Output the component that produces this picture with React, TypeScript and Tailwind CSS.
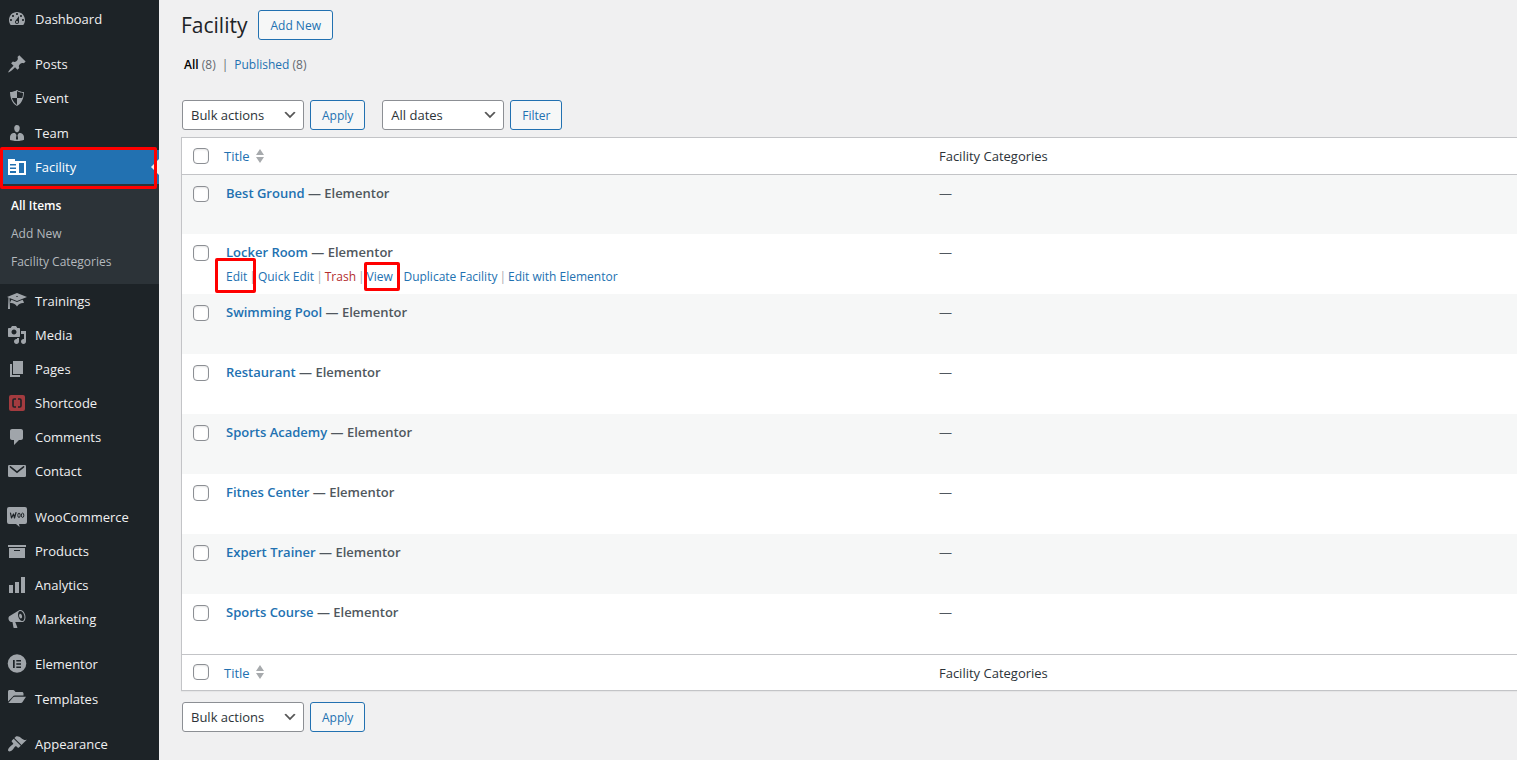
import type { ReactNode } from "react"
import clsx from "clsx"

interface MenuItem {
    title: string
    icon: ReactNode
    gap?: string
}

const Dash = ({ d }: { d: string }) => (
    <svg viewBox="0 0 20 20" className="h-5 w-5" fill="currentColor" fillRule="evenodd" aria-hidden="true">
        <path d={d} />
    </svg>
)

const topItems: MenuItem[] = [
    {
        title: "Dashboard",
        icon: <Dash d="M3.76 16h12.48c1.1-1.37 1.76-3.11 1.76-5 0-4.42-3.58-8-8-8s-8 3.58-8 8c0 1.89.66 3.63 1.76 5zM10 4c.55 0 1 .45 1 1s-.45 1-1 1-1-.45-1-1 .45-1 1-1zM6 6c.55 0 1 .45 1 1s-.45 1-1 1-1-.45-1-1 .45-1 1-1zm8 0c.55 0 1 .45 1 1s-.45 1-1 1-1-.45-1-1 .45-1 1-1zm-5.37 5.55L12 7v6c0 1.1-.9 2-2 2s-2-.9-2-2c0-.57.24-1.08.63-1.45zM4 10c.55 0 1 .45 1 1s-.45 1-1 1-1-.45-1-1 .45-1 1-1zm12 0c.55 0 1 .45 1 1s-.45 1-1 1-1-.45-1-1 .45-1 1-1zm-5 3c0-.55-.45-1-1-1s-1 .45-1 1 .45 1 1 1 1-.45 1-1z" />
    },
    {
        title: "Posts",
        gap: "mt-[11px]",
        icon: <Dash d="M10.44 3.02l1.82-1.82 6.36 6.35-1.83 1.82c-1.05-.68-2.48-.57-3.41.36l-.75.75c-.92.93-1.04 2.35-.35 3.41l-1.83 1.82-2.41-2.41-2.8 2.79c-.42.42-3.38 2.71-3.8 2.29s1.86-3.39 2.28-3.81l2.79-2.79L4.1 9.36l1.83-1.82c1.05.69 2.48.57 3.4-.36l.75-.75c.93-.92 1.05-2.35.36-3.41z" />
    },
    {
        title: "Event",
        icon: <Dash d="M10 2s3 2 7 2c0 11-7 14-7 14S3 15 3 4c4 0 7-2 7-2zm0 8h5s1-1 1-5c0 0-5-1-6-2v7H5c1 4 5 7 5 7v-7z" />
    },
    {
        title: "Team",
        gap: "mt-px",
        icon: <Dash d="M7.3 6l-.03-.19c-.04-.37-.05-.73-.03-1.08.02-.36.1-.71.25-1.04.14-.32.31-.61.52-.86s.49-.46.83-.6c.34-.15.72-.23 1.13-.23.69 0 1.26.2 1.71.59s.76.87.91 1.44.18 1.16.09 1.78l-.03.19c-.01.09-.05.25-.11.48-.05.24-.12.47-.2.69-.08.21-.19.45-.34.72-.14.27-.3.49-.47.69-.18.19-.4.34-.67.48-.27.13-.55.19-.86.19s-.59-.06-.87-.19c-.26-.13-.49-.29-.67-.5-.18-.2-.34-.42-.49-.66-.15-.25-.26-.49-.34-.73-.09-.25-.16-.47-.21-.67-.06-.21-.1-.37-.12-.5zm9.2 6.24c.41.7.5 1.41.5 2.14v2.49c0 .03-.12.08-.29.13-.18.04-.42.13-.97.27-.55.12-1.1.24-1.65.34s-1.19.19-1.95.27c-.75.08-1.46.12-2.13.12-.68 0-1.39-.04-2.14-.12-.75-.07-1.4-.17-1.98-.27-.58-.11-1.08-.23-1.56-.34-.49-.11-.8-.21-1.06-.29L3 16.87v-2.49c0-.75.07-1.46.46-2.15s.81-1.25 1.5-1.68C5.66 10.12 7.19 10 8 10l1.5 2L9 15v1l1.02 1.08L11 16v-1l-.5-3 1.47-2c.77 0 2.2.07 2.9.52.71.45 1.21 1.02 1.63 1.72z" />
    }
]

const bottomItems: MenuItem[] = [
    {
        title: "Trainings",
        icon: <Dash d="M10 10L2.54 7.02 3 18H1l.48-11.41L0 6l10-4 10 4zm0-5c-.55 0-1 .22-1 .5s.45.5 1 .5 1-.22 1-.5-.45-.5-1-.5zm0 6l5.57-2.23c.71.94 1.2 2.07 1.36 3.3-.3-.04-.61-.07-.93-.07-2.55 0-4.78 1.37-6 3.41C8.78 13.37 6.55 12 4 12c-.32 0-.63.03-.93.07.16-1.23.65-2.36 1.36-3.3z" />
    },
    {
        title: "Media",
        icon: <Dash d="M13 11V4c0-.55-.45-1-1-1h-1.67L9 1H5L3.67 3H2c-.55 0-1 .45-1 1v7c0 .55.45 1 1 1h10c.55 0 1-.45 1-1zM7 4.5c1.38 0 2.5 1.12 2.5 2.5S8.38 9.5 7 9.5 4.5 8.38 4.5 7 5.62 4.5 7 4.5zM14 6h5v10.5c0 1.38-1.12 2.5-2.5 2.5S14 17.88 14 16.5s1.12-2.5 2.5-2.5c.17 0 .34.02.5.05V9h-3V6zm-4 8.05V13h2v3.5c0 1.38-1.12 2.5-2.5 2.5S7 17.88 7 16.5 8.12 14 9.5 14c.17 0 .34.02.5.05z" />
    },
    {
        title: "Pages",
        icon: <Dash d="M6 15V2h10v13H6zm-1 1h8v2H3V5h2v11z" />
    },
    {
        title: "Shortcode",
        icon: (
            <svg viewBox="0 0 20 20" className="h-5 w-5" aria-hidden="true">
                <rect x="2" y="2" width="16" height="16" rx="2" fill="#a33b3f" />
                <path d="M9 6H7.200Q6 6 6 7.200v5.600Q6 14 7.200 14H9M11 6h1.800Q14 6 14 7.200v5.600Q14 14 12.800 14H11" fill="none" stroke="#1d2327" strokeWidth="1.6" />
            </svg>
        )
    },
    {
        title: "Comments",
        icon: <Dash d="M5 2h9c1.1 0 2 .9 2 2v7c0 1.1-.9 2-2 2h-2l-5 5v-5H5c-1.1 0-2-.9-2-2V4c0-1.1.9-2 2-2z" />
    },
    {
        title: "Contact",
        icon: (
            <svg viewBox="0 0 20 20" className="h-5 w-5" aria-hidden="true">
                <rect x="1" y="4" width="18" height="12" rx="1.3" fill="currentColor" />
                <path d="M3.4 5.8 10 11.2l6.6-5.4" fill="none" stroke="#1d2327" strokeWidth="1.5" strokeLinecap="round" />
            </svg>
        )
    },
    {
        title: "WooCommerce",
        gap: "mt-3",
        icon: (
            <svg viewBox="0 0 20 20" className="h-5 w-5" aria-hidden="true">
                <path d="M2 0h16a2 2 0 0 1 2 2v13a2 2 0 0 1-2 2h-6l.6 3-3.6-3H2a2 2 0 0 1-2-2V2a2 2 0 0 1 2-2z" fill="currentColor" />
                <path d="M3.5 6l1 5 2-4 1 4L9 5.5" fill="none" stroke="#1d2327" strokeWidth="1.2" strokeLinejoin="round" strokeLinecap="round" />
                <ellipse cx="12" cy="8.3" rx="1.2" ry="2.2" fill="none" stroke="#1d2327" />
                <ellipse cx="15.6" cy="8.3" rx="1.2" ry="2.2" fill="none" stroke="#1d2327" />
            </svg>
        )
    },
    {
        title: "Products",
        icon: <Dash d="M19 4v2H1V4h18zM2 7h16v10H2V7zm11 3V9H7v1h6z" />
    },
    {
        title: "Analytics",
        icon: <Dash d="M18 18V2h-4v16h4zm-6 0V7H8v11h4zm-6 0v-8H2v8h4z" />
    },
    {
        title: "Marketing",
        icon: <Dash d="M18.15 5.94c.46 1.62.38 3.22-.02 4.48-.42 1.28-1.26 2.18-2.3 2.48-.16.06-.26.06-.4.06-.06.02-.12.02-.18.02-.06.02-.14.02-.22.02h-6.8l2.22 5.5c.02.14-.06.26-.14.34-.08.1-.24.16-.34.16H6.95c-.1 0-.26-.06-.34-.16-.08-.08-.16-.2-.14-.34l-1-5.5H4.25l-.02-.02c-.5.06-1.08-.18-1.54-.62s-.88-1.08-1.06-1.88c-.24-.8-.2-1.56-.02-2.2.18-.62.58-1.08 1.06-1.3l.02-.02 9-5.4c.1-.06.18-.1.24-.16.06-.04.14-.08.24-.12.16-.08.28-.12.5-.18 1.04-.3 2.24.1 3.22.98s1.84 2.24 2.26 3.86zm-2.58 5.98h-.02c.4-.1.74-.34 1.04-.7.58-.7.86-1.76.86-3.04 0-.64-.1-1.3-.28-1.98-.34-1.36-1.02-2.5-1.78-3.24s-1.68-1.1-2.46-.88c-.82.22-1.4.96-1.7 2-.32 1.04-.28 2.36.06 3.72.38 1.36 1 2.5 1.8 3.24.78.74 1.62 1.1 2.48.88zm-2.54-7.08c.22-.04.42-.02.62.04.38.16.76.48 1.02 1s.42 1.2.42 1.78c0 .3-.04.56-.12.8-.18.48-.44.84-.86.94-.34.1-.8-.06-1.14-.4s-.64-.86-.78-1.5c-.18-.62-.12-1.24.02-1.72s.48-.84.82-.94z" />
    },
    {
        title: "Elementor",
        gap: "mt-[11px]",
        icon: (
            <svg viewBox="0 0 20 20" className="h-5 w-5" aria-hidden="true">
                <circle cx="10" cy="9.5" r="9.3" fill="currentColor" />
                <path d="M6 6h1.7v8H6zM9.3 6H14v1.6H9.3zM9.3 9.2H14v1.6H9.3zM9.3 12.4H14V14H9.3z" fill="#1d2327" />
            </svg>
        )
    },
    {
        title: "Templates",
        gap: "mt-px",
        icon: <Dash d="M1 12.500V2.500C1 1.700 1.700 1 2.500 1h3.700c.6 0 1 .2 1.300.7L8.500 3H15c.8 0 1.500.7 1.500 1.500V6.500H8C7 6.500 6.200 6.900 5.700 7.700zM1.300 14l4.900-5.700c.3-.4.800-.6 1.300-.6H19l-3.600 5.500c-.3.500-.8.800-1.400.8z" />
    },
    {
        title: "Appearance",
        gap: "mt-[11px]",
        icon: <Dash d="M14.48 11.06L7.41 3.99l1.5-1.5c.5-.56 2.3-.47 3.51.32 1.21.8 1.43 1.28 2.91 2.1 1.18.64 2.45 1.26 4.45.85zm-.71.71L6.7 4.7 4.93 6.47c-.39.39-.39 1.02 0 1.41l1.06 1.06c.39.39.39 1.03 0 1.42-.6.6-1.43 1.11-2.21 1.69-.35.26-.7.53-1.01.84C1.43 14.23.4 16.08 1.4 17.07c.99 1 2.84-.03 4.18-1.36.31-.31.58-.66.85-1.02.57-.78 1.08-1.61 1.69-2.21.39-.39 1.02-.39 1.41 0l1.06 1.06c.39.39 1.02.39 1.41 0z" />
    }
]

const facilities = [
    "Best Ground",
    "Locker Room",
    "Swimming Pool",
    "Restaurant",
    "Sports Academy",
    "Fitnes Center",
    "Expert Trainer",
    "Sports Course"
]

const MenuLink = ({ item }: { item: MenuItem }) => {
    return (
        <li className={clsx(item.gap)}>
            <a href="#" className="flex h-[34px] items-center gap-2 pl-[7px] text-[#f0f0f1]">
                <span className="text-[#a0a5aa]">{item.icon}</span>
                <span className="pt-0.5">{item.title}</span>
            </a>
        </li>
    )
}

const Sidebar = () => {
    return (
        <nav className="w-[159px] shrink-0 bg-[#1d2327] pt-0.5 text-[13px]">
            <ul>
                {topItems.map(item => <MenuLink key={item.title} item={item} />)}
                <li>
                    <div className="relative">
                        <a href="#" className="flex h-[34px] items-center gap-2 bg-[#2271b1] pl-[7px] text-white">
                            <svg viewBox="0 0 20 20" className="h-5 w-5" aria-hidden="true">
                                <path d="M1 2h7v2h11v14H1zM3 7v1.500h6V7zM3 10.500V12h6v-1.500zM3 14v2h6v-2zM12 6v10h5V6z" fill="currentColor" fillRule="evenodd" />
                            </svg>
                            <span className="pt-0.5">Facility</span>
                        </a>
                        <svg viewBox="0 0 8 16" className="absolute top-[9px] right-0 h-4 w-2" aria-hidden="true">
                            <path d="M8 0v16L0 8z" fill="#f0f0f1" />
                        </svg>
                        <span className="absolute -top-[3px] right-[2px] -bottom-[5px] left-0 rounded-xs border-3 border-[#ff0000]" />
                    </div>
                    <ul className="bg-[#2c3338] py-2 text-xs text-[#b4b9be]">
                        <li><a href="#" className="flex h-7 items-center pl-[11px] font-semibold text-white">All Items</a></li>
                        <li><a href="#" className="flex h-7 items-center pl-[11px]">Add New</a></li>
                        <li><a href="#" className="flex h-7 items-center pl-[11px]">Facility Categories</a></li>
                    </ul>
                </li>
                {bottomItems.map(item => <MenuLink key={item.title} item={item} />)}
            </ul>
        </nav>
    )
}

const Button = ({ children }: { children: ReactNode }) => {
    return (
        <button type="button" className="h-[30px] rounded-[3px] border border-[#2271b1] bg-[#f6f7f7] px-[11px] pt-0.5 text-xs text-[#2271b1]">
            {children}
        </button>
    )
}

const Select = ({ label, option }: { label: string, option: string }) => {
    return (
        <div className="relative">
            <select aria-label={label} className="h-[30px] w-[122px] appearance-none rounded-[3px] border border-[#8c8f94] bg-white pt-0.5 pr-6 pl-2 text-[13px] text-[#2c3338]">
                <option>{option}</option>
            </select>
            <svg viewBox="0 0 20 20" className="pointer-events-none absolute top-[7px] right-1.5 h-4 w-4" aria-hidden="true">
                <path d="M5 6l5 5 5-5 2 1-7 7-7-7 2-1z" fill="#555" />
            </svg>
        </div>
    )
}

const Checkbox = ({ label }: { label: string }) => {
    return (
        <input type="checkbox" aria-label={label} className="block h-4 w-4 appearance-none rounded-sm border border-[#8c8f94] bg-white shadow-[inset_0_1px_2px_rgba(0,0,0,0.1)]" />
    )
}

const HeadRow = () => {
    return (
        <tr className="h-9">
            <td className="pl-[11px]"><Checkbox label="Select All" /></td>
            <th scope="col" className="text-left font-normal">
                <a href="#" className="flex items-center gap-1.5 text-[#2271b1]">
                    <span className="pt-0.5">Title</span>
                    <svg viewBox="0 0 8 14" className="h-3.5 w-2" fill="#a7aaad" aria-hidden="true">
                        <path d="M4 0l4 6H0zM4 14l4-6H0z" />
                    </svg>
                </a>
            </th>
            <th scope="col" className="pt-0.5 text-left font-normal">Facility Categories</th>
        </tr>
    )
}

const RowActions = () => {
    return (
        <div className="mt-1.5 flex gap-0.5 text-xs leading-[18px] text-[#a7aaad]">
            <span className="relative">
                <a href="#" className="text-[#2271b1]">Edit</a>
                <span className="absolute -top-[10px] -right-[9px] -bottom-[7px] -left-[11px] rounded-xs border-3 border-[#ff0000]" />
            </span>
            |
            <a href="#" className="text-[#2271b1]">Quick Edit</a>
            |
            <a href="#" className="text-[#b32d2e]">Trash</a>
            |
            <span className="relative">
                <a href="#" className="text-[#2271b1]">View</a>
                <span className="absolute -top-[6px] -right-[7px] -bottom-[5px] -left-[3px] rounded-xs border-3 border-[#ff0000]" />
            </span>
            |
            <a href="#" className="text-[#2271b1]">Duplicate Facility</a>
            |
            <a href="#" className="text-[#2271b1]">Edit with Elementor</a>
        </div>
    )
}

const FacilityTable = () => {
    return (
        <div className="mt-[7px] border border-r-0 border-[#c3c4c7] bg-white shadow-[0_1px_1px_rgba(0,0,0,0.04)]">
            <table className="w-full table-fixed border-collapse text-[13px] text-[#2c3338]">
                <colgroup>
                    <col className="w-[42px]" />
                    <col />
                    <col className="w-[43.3%]" />
                </colgroup>
                <thead className="border-b border-[#c3c4c7]">
                    <HeadRow />
                </thead>
                <tbody>
                    {facilities.map(name => (
                        <tr key={name} className="h-[60px] align-top odd:bg-[#f6f7f7]">
                            <td className="pt-[11px] pl-[11px]"><Checkbox label={`Select ${name}`} /></td>
                            <td className="pt-2 pl-0.5">
                                <strong className="block leading-5 font-semibold text-[#50575e]">
                                    <a href="#" className="text-[#2271b1]">{name}</a> — Elementor
                                </strong>
                                {name === "Locker Room" && <RowActions />}
                            </td>
                            <td className="pt-2 leading-5 text-[#50575e]">—</td>
                        </tr>
                    ))}
                </tbody>
                <tfoot className="border-t border-[#c3c4c7]">
                    <HeadRow />
                </tfoot>
            </table>
        </div>
    )
}

const App = () => {
    return (
        <div className="flex h-screen overflow-hidden bg-[#f0f0f1] font-['Open_Sans',sans-serif]">
            <Sidebar />
            <main className="min-w-0 flex-1 pt-2.5 pl-[22px]">
                <div className="flex items-center gap-[11px]">
                    <h1 className="text-[21px] leading-[30px] text-[#1d2327]">Facility</h1>
                    <Button>Add New</Button>
                </div>
                <div className="mt-4 flex gap-1.5 pl-[3px] text-xs leading-[18px] text-[#646970]">
                    <span><a href="#" className="font-semibold text-black">All</a> (8)</span>
                    |
                    <span><a href="#" className="text-[#2271b1]">Published</a> (8)</span>
                </div>
                <div className="mt-[26px] flex gap-1.5 pl-px">
                    <Select label="Select bulk action" option="Bulk actions" />
                    <Button>Apply</Button>
                    <div className="ml-[11px] flex gap-1.5">
                        <Select label="Filter by date" option="All dates" />
                        <Button>Filter</Button>
                    </div>
                </div>
                <FacilityTable />
                <div className="mt-[11px] flex gap-1.5 pl-px">
                    <Select label="Select bulk action below" option="Bulk actions" />
                    <Button>Apply</Button>
                </div>
            </main>
        </div>
    )
}

export default App
